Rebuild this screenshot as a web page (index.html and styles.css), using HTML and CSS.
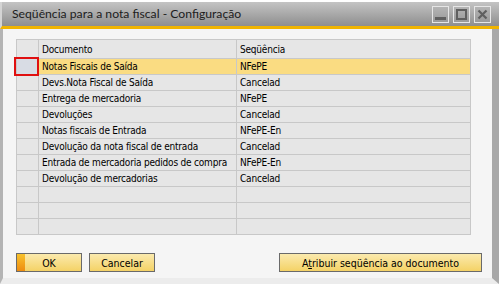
FILE: index.html
```html
<!DOCTYPE html>
<html>
<head>
    <title>Seqüência para a nota fiscal - Configuração</title>
    <link rel="stylesheet" href="styles.css">
</head>
<body>
    <div class="window">
        <div class="titlebar">
            <span class="title">Seqüência para a nota fiscal - Configuração</span>
            <div class="controls">
                <span class="ctl"><svg width="11" height="11" viewBox="0 0 11 11"><rect x="0" y="8" width="11" height="3" fill="#5f5f5f"/></svg></span>
                <span class="ctl"><svg width="11" height="11" viewBox="0 0 11 11"><rect x="1" y="1" width="9" height="9" fill="none" stroke="#5f5f5f" stroke-width="2"/></svg></span>
                <span class="ctl"><svg width="11" height="11" viewBox="0 0 11 11"><path d="M1.5 1.5 L9.5 9.5 M9.5 1.5 L1.5 9.5" stroke="#5f5f5f" stroke-width="2.2"/></svg></span>
            </div>
        </div>
        <div class="body">
            <table class="grid">
                <tr class="head">
                    <th class="rh"></th>
                    <th class="doc">Documento</th>
                    <th class="seq">Seqüência</th>
                </tr>
                <tr class="selected">
                    <td class="rh"><span class="focus"></span></td>
                    <td>Notas Fiscais de Saída</td>
                    <td>NFePE</td>
                </tr>
                <tr><td class="rh"></td><td>Devs.Nota Fiscal de Saída</td><td>Cancelad</td></tr>
                <tr><td class="rh"></td><td>Entrega de mercadoria</td><td>NFePE</td></tr>
                <tr><td class="rh"></td><td>Devoluções</td><td>Cancelad</td></tr>
                <tr><td class="rh"></td><td>Notas fiscais de Entrada</td><td>NFePE-En</td></tr>
                <tr><td class="rh"></td><td>Devolução da nota fiscal de entrada</td><td>Cancelad</td></tr>
                <tr><td class="rh"></td><td>Entrada de mercadoria pedidos de compra</td><td>NFePE-En</td></tr>
                <tr><td class="rh"></td><td>Devolução de mercadorias</td><td>Cancelad</td></tr>
                <tr><td class="rh"></td><td></td><td></td></tr>
                <tr><td class="rh"></td><td></td><td></td></tr>
                <tr><td class="rh"></td><td></td><td></td></tr>
            </table>

            <div class="buttons">
                <button class="btn ok">OK</button>
                <button class="btn">Cancelar</button>
                <button class="btn wide">A<u>t</u>ribuir seqüência ao documento</button>
            </div>
        </div>
    </div>
</body>
</html>
```

FILE: styles.css
```css
body {
    margin: 0;
    background-color: #fff;
    font-family: "DejaVu Sans Condensed", "DejaVu Sans", sans-serif;
}

.window {
    width: 499px;
    height: 284px;
    box-sizing: border-box;
    padding-top: 2px;
    background-color: #fff;
    display: flex;
    flex-direction: column;
}

.titlebar {
    height: 24px;
    display: flex;
    align-items: center;
    justify-content: space-between;
    background: linear-gradient(#c4c4c4, #8e8e8e);
    border-left: 2px solid #d4d4d4;
    border-bottom: 3px solid #f0b400;
}

.title {
    font-family: Lato, sans-serif;
    font-size: 12.2px;
    color: #1c1c1c;
    padding-left: 10px;
    padding-bottom: 1px;
}

.controls {
    display: flex;
    gap: 4px;
    padding-right: 8px;
}

.ctl {
    width: 15px;
    height: 15px;
    border: 1px solid #e6e6e6;
    background: linear-gradient(#b4b4b4, #9a9a9a);
    display: flex;
    align-items: center;
    justify-content: center;
}

.body {
    flex: 1;
    background-color: #f5f5f5;
    border-left: 3px solid #b4b4b4;
    border-right: 7px solid #a8a8a8;
    border-bottom: 6px solid #ececec;
    padding: 10px 0 0 13px;
}

.grid {
    border-collapse: collapse;
    table-layout: fixed;
    width: 455px;
    font-size: 10px;
    letter-spacing: -0.2px;
    color: #000;
}

.grid th,
.grid td {
    border: 1px solid #c8c8c8;
    background-color: #e6e6e6;
    height: 15px;
    padding: 0 0 0 3px;
    text-align: left;
    font-weight: normal;
    white-space: nowrap;
    overflow: hidden;
}

.grid .head th {
    height: 18px;
}

.grid .rh {
    width: 21px;
    padding: 0;
}

.grid .doc {
    width: 194px;
}

.grid .selected td {
    background-color: #fadc82;
}

.grid .selected td.rh {
    background-color: #d8dce4;
    position: relative;
    overflow: visible;
}

.focus {
    position: absolute;
    z-index: 2;
    left: -3px;
    top: -2px;
    width: 21px;
    height: 15px;
    border: 2px solid #e01010;
}

.buttons {
    display: flex;
    margin-top: 18px;
}

.btn {
    height: 19px;
    width: 66px;
    border: 1px solid #6a6a6a;
    background: linear-gradient(#fbeaae, #f4d266);
    font-family: "DejaVu Sans Condensed", "DejaVu Sans", sans-serif;
    font-size: 10.5px;
    color: #000;
    padding: 0;
    margin-right: 7px;
}

.btn.ok {
    background: linear-gradient(#f8c22c, #ee8c10) left / 8px 100% no-repeat,
                linear-gradient(#fbeaae, #f4d266);
}

.btn.wide {
    width: 203px;
    margin-left: 117px;
}
```
